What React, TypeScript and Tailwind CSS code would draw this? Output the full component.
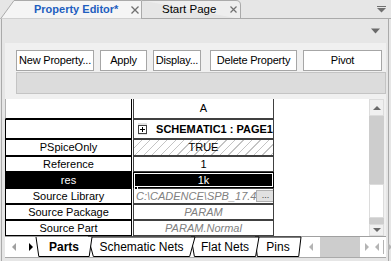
import type { ReactNode } from 'react'

type Row = {
  name: string
  value: ReactNode
  height: string
  selected?: boolean
  hatched?: boolean
}

function PlusBox() {
  return (
    <div className="flex h-[12px] w-[12px] items-center justify-center bg-[#e4e4e4]">
      <svg width="9" height="9" viewBox="0 0 9 9">
        <rect x="0.5" y="0.5" width="8" height="8" fill="#fff" stroke="#404040" />
        <path d="M2 4.5h5M4.5 2v5" stroke="#000" />
      </svg>
    </div>
  )
}

const rows: Row[] = [
  {
    name: '',
    height: 'h-[20px]',
    value: (
      <div className="flex h-full items-center gap-[9px] pl-[4px]">
        <PlusBox />
        <span className="whitespace-nowrap font-bold">SCHEMATIC1 : PAGE1</span>
      </div>
    ),
  },
  { name: 'PSpiceOnly', height: 'h-[17px]', hatched: true, value: <span className="block text-center">TRUE</span> },
  { name: 'Reference', height: 'h-[16px]', value: <span className="block text-center">1</span> },
  { name: 'res', height: 'h-[16px]', selected: true, value: <span className="block text-center">1k</span> },
  {
    name: 'Source Library',
    height: 'h-[16px]',
    value: (
      <div className="flex h-full items-center justify-between pl-[2px] pr-[1px]">
        <span className="whitespace-nowrap italic text-[#808080]">C:\CADENCE\SPB_17.4</span>
        <div className="flex h-[12px] w-[18px] shrink-0 items-end justify-center border border-[#b0b0b0] bg-[#e1e1e1] pb-[1px] text-[9px] leading-none text-[#404040]">
          ...
        </div>
      </div>
    ),
  },
  { name: 'Source Package', height: 'h-[16px]', value: <span className="block text-center italic text-[#808080]">PARAM</span> },
  { name: 'Source Part', height: 'h-[16px]', value: <span className="block text-center italic text-[#808080]">PARAM.Normal</span> },
]

function Tri({ dir, color }: { dir: 'up' | 'down' | 'left' | 'right'; color: string }) {
  const d = {
    up: 'M0 5 L4 1 L8 5 Z',
    down: 'M0 1 L8 1 L4 5 Z',
    left: 'M5 0 L5 8 L1 4 Z',
    right: 'M1 0 L1 8 L5 4 Z',
  }[dir]
  const w = dir === 'up' || dir === 'down' ? 8 : 6
  const h = dir === 'up' || dir === 'down' ? 6 : 8
  return (
    <svg width={w} height={h} viewBox={`0 0 ${w} ${h}`}>
      <path d={d} fill={color} />
    </svg>
  )
}

function SheetTab({ label, width, active, z }: { label: string; width: string; active?: boolean; z: string }) {
  return (
    <div className={`relative -ml-[4px] flex h-[20px] shrink-0 items-center justify-center ${width} ${z}`}>
      <svg className="absolute inset-0 h-full w-full" preserveAspectRatio="none" viewBox="0 0 100 20">
        <polygon points="0,0 100,0 95,19.5 5,19.5" fill="#fff" />
      </svg>
      <svg className="absolute inset-0 h-full w-full overflow-visible" preserveAspectRatio="none" viewBox="0 0 100 20">
        <polyline
          points={active ? '0,0 5,19.5 95,19.5 100,0' : '0,0 5,19.5 95,19.5 100,0 0,0'}
          fill="none"
          stroke="#000"
          strokeWidth="1"
          vectorEffect="non-scaling-stroke"
        />
      </svg>
      <span className={`relative whitespace-nowrap text-[12px] ${active ? 'font-bold' : ''}`}>{label}</span>
    </div>
  )
}

export default function App() {
  return (
    <div className="h-[261px] w-[391px] overflow-hidden bg-[#e6e6e6] font-['Liberation_Sans',Arial,sans-serif] text-black">
      {/* document tabs */}
      <div className="flex h-[19px]">
        <div className="relative flex h-[19px] w-[142px] shrink-0 items-center pl-[34px]">
          <svg className="absolute inset-0" width="142" height="19">
            <polygon points="0.5,19 14,0.5 141.5,0.5 141.5,19" fill="#f5f5f5" stroke="#aaaaaa" />
          </svg>
          <span className="relative whitespace-nowrap text-[11px] font-bold text-[#1f5fbf]">Property Editor*</span>
          <svg className="relative ml-[13px]" width="8" height="8" viewBox="0 0 8 8">
            <path d="M0.5 0.5L7.5 7.5M7.5 0.5L0.5 7.5" stroke="#707070" strokeWidth="1.3" />
          </svg>
        </div>
        <div className="relative flex h-[19px] w-[99px] shrink-0 items-center pl-[20px]">
          <svg className="absolute inset-0" width="99" height="19">
            <path d="M0 0.5H94Q98.5 0.5 98.5 5V19" fill="#eeeeee" stroke="#aaaaaa" />
            <path d="M0 18.5H99" stroke="#aaaaaa" />
          </svg>
          <span className="relative whitespace-nowrap text-[11.5px] text-black">Start Page</span>
          <svg className="relative ml-[14px]" width="7" height="7" viewBox="0 0 7 7">
            <path d="M0.5 0.5L6.5 6.5M6.5 0.5L0.5 6.5" stroke="#707070" strokeWidth="1.2" />
          </svg>
        </div>
        <div className="flex flex-1 items-start justify-end border-b border-[#aaaaaa] pr-[5px] pt-[6px]">
          <svg width="9" height="7" viewBox="0 0 9 7">
            <path d="M0 0.5H9" stroke="#707070" />
            <path d="M0 2H9L4.5 6.5Z" fill="#707070" />
          </svg>
        </div>
      </div>

      {/* panel */}
      <div className="ml-[1px] flex h-[242px] w-[388px] flex-col border-l border-r border-[#aaaaaa]">
        <div className="flex h-[24px] shrink-0 items-center justify-end pr-[8px]">
          <svg width="9" height="6" viewBox="0 0 9 6">
            <path d="M0 0.5H9L4.5 5.5Z" fill="#6a6a6a" />
          </svg>
        </div>

        <div className="ml-[3px] mr-[2px] flex h-[215px] flex-col border-b border-[#aaaaaa] bg-[#f0f0f0]">
          {/* buttons */}
          <div className="mt-[7px] flex h-[21px] pl-[11px] text-[11px] tracking-[-0.2px]">
            <button className="h-full w-[78px] border border-[#a6a6a6] bg-white">New Property...</button>
            <button className="ml-[6px] h-full w-[47px] border border-[#a6a6a6] bg-white">Apply</button>
            <button className="ml-[6px] h-full w-[48px] border border-[#a6a6a6] bg-white">Display...</button>
            <button className="ml-[9px] h-full w-[87px] border border-[#a6a6a6] bg-white">Delete Property</button>
            <button className="ml-[6px] h-full w-[79px] border border-[#a6a6a6] bg-white">Pivot</button>
          </div>

          {/* filter bar */}
          <div className="ml-[11px] mt-[1px] h-[22px] border border-[#c4c4c4] bg-[#dcdcdc]" />

          {/* grid */}
          <div className="mt-[5px] flex h-[137px]">
            <div className="flex w-[364px] flex-col bg-white text-[11px] leading-none">
              <div className="flex h-[20px]">
                <div className="w-[127px] border-b border-l border-r border-b-black border-l-[#b0b0b0] border-r-black" />
                <div className="ml-[1px] flex w-[141px] items-center justify-center border-b border-l border-r border-[#404040]">
                  A
                </div>
              </div>
              {rows.map((r) => (
                <div key={r.name || 'schematic'} className={`flex ${r.height}`}>
                  <div
                    className={`flex w-[127px] items-center justify-center border border-black ${
                      r.selected ? 'bg-black text-white' : ''
                    }`}
                  >
                    {r.name}
                  </div>
                  <div
                    className={`relative ml-[1px] flex w-[141px] flex-col justify-center border ${
                      r.selected ? 'z-10 border-black bg-black text-white outline outline-1 -outline-offset-2 outline-white' : 'overflow-hidden border-[#404040]'
                    } ${r.hatched ? 'bg-[repeating-linear-gradient(135deg,#ffffff_0px,#ffffff_5px,#c4c4c4_5px,#c4c4c4_6px)]' : ''}`}
                  >
                    {r.value}
                    {r.selected && <div className="absolute -bottom-[3px] left-[0px] h-[4px] w-[4px] border border-white bg-black" />}
                  </div>
                </div>
              ))}
            </div>

            {/* vertical scrollbar */}
            <div className="flex w-[15px] flex-col bg-[#cdcdcd]">
              <div className="flex h-[17px] items-center justify-center border border-[#dcdcdc] bg-[#f0f0f0]">
                <Tri dir="up" color="#6a6a6a" />
              </div>
              <div className="mt-[68px] h-[34px] border border-[#dcdcdc] bg-white" />
              <div className="mt-auto flex h-[12px] items-center justify-center border border-[#dcdcdc] bg-[#f0f0f0]">
                <Tri dir="down" color="#6a6a6a" />
              </div>
            </div>
          </div>

          {/* sheet tabs */}
          <div className="flex h-[21px] border-t border-[#a0a0a0] bg-white">
            <div className="flex w-[31px] shrink-0 items-center gap-[11px] pl-[6px]">
              <Tri dir="left" color="#a0a0a0" />
              <Tri dir="right" color="#000" />
            </div>
            <div className="flex items-start pl-[4px]">
              <SheetTab label="Parts" width="w-[56px]" active z="z-40" />
              <SheetTab label="Schematic Nets" width="w-[107px]" z="z-30" />
              <SheetTab label="Flat Nets" width="w-[68px]" z="z-20" />
              <SheetTab label="Pins" width="w-[46px]" z="z-10" />
            </div>
            <div className="ml-[1px] flex flex-1 items-center">
              <div className="flex w-[18px] justify-center">
                <Tri dir="left" color="#b4b4b4" />
              </div>
              <div className="h-full w-[40px] bg-[#cdcdcd]" />
              <div className="flex w-[14px] justify-center">
                <Tri dir="right" color="#b4b4b4" />
              </div>
              <div className="flex flex-1 items-center justify-end gap-[3px] pr-[1px]">
                <Tri dir="left" color="#b4b4b4" />
                <div className="h-[14px] w-px bg-[#b4b4b4]" />
                <Tri dir="right" color="#b4b4b4" />
              </div>
            </div>
          </div>
        </div>
      </div>
    </div>
  )
}
